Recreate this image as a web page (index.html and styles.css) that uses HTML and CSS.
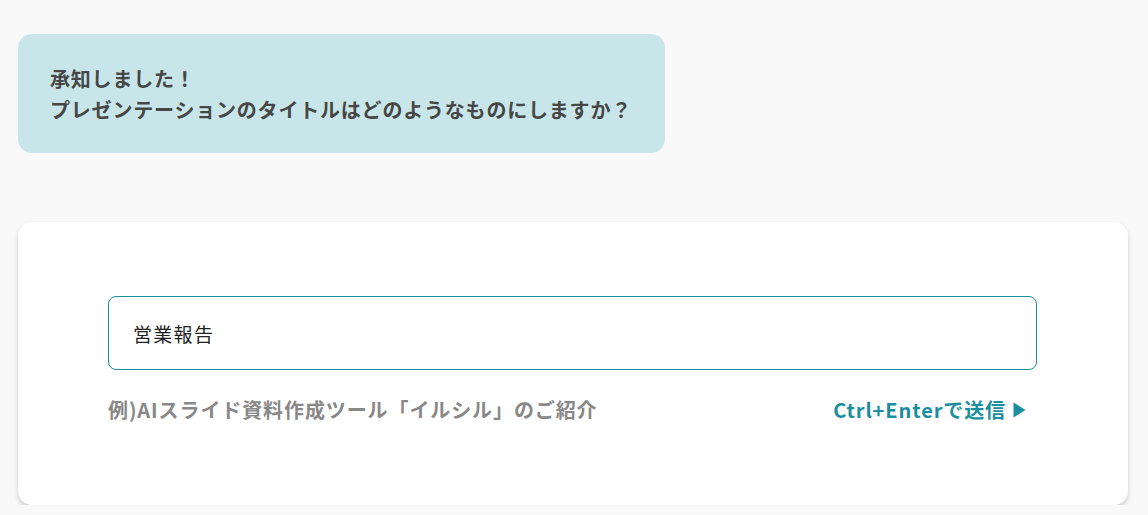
FILE: index.html
```html
<!DOCTYPE html>
<html lang="ja">
<head>
<meta charset="utf-8">
<link rel="stylesheet" href="styles.css">
</head>
<body>
<div class="page">
  <div class="bubble">
    <p>承知しました！</p>
    <p>プレゼンテーションのタイトルはどのようなものにしますか？</p>
  </div>
  <div class="card">
    <div class="input">営業報告</div>
    <div class="hint-row">
      <span class="hint">例)AIスライド資料作成ツール「イルシル」のご紹介</span>
      <span class="send">Ctrl+Enterで送信<svg class="tri" width="13" height="16" viewBox="0 0 13 16"><path d="M0.5 0.5 L12.5 8 L0.5 15.5 Z" fill="currentColor"/></svg></span>
    </div>
  </div>
</div>
</body>
</html>
```
FILE: styles.css
```css
html, body {
  margin: 0;
  padding: 0;
  background: #f9f9f9;
  font-family: "Noto Sans CJK JP", "Noto Sans", sans-serif;
}
.page {
  padding: 34px 20px 0 18px;
  display: flex;
  flex-direction: column;
  align-items: flex-start;
}
.bubble {
  width: 647px;
  box-sizing: border-box;
  background: #c8e6ea;
  border-radius: 14px;
  padding: 29px 20px 28px 32px;
  color: #464646;
  font-weight: 700;
  font-size: 20px;
  letter-spacing: 0.8px;
  line-height: 31px;
}
.bubble p { margin: 0; white-space: nowrap; }
.card {
  margin-top: 69px;
  align-self: stretch;
  background: #ffffff;
  border-radius: 14px;
  box-shadow: 0 3px 5px rgba(0,0,0,0.18);
  padding: 74px 91px 0 90px;
  height: 283px;
  box-sizing: border-box;
}
.input {
  height: 74px;
  box-sizing: border-box;
  border: 1px solid #1c8f9b;
  border-radius: 8px;
  padding: 0 24px;
  display: flex;
  align-items: center;
  font-size: 19px;
  letter-spacing: 1.3px;
  color: #222;
}
.hint-row {
  margin-top: 26px;
  display: flex;
  justify-content: space-between;
  align-items: center;
  padding-right: 11px;
  font-weight: 700;
  font-size: 20px;
  letter-spacing: 0.9px;
  line-height: 28px;
}
.hint { color: #888888; }
.send {
  color: #1a8e9e;
  display: flex;
  align-items: center;
  gap: 7px;
}
.tri { display: block; }
```
